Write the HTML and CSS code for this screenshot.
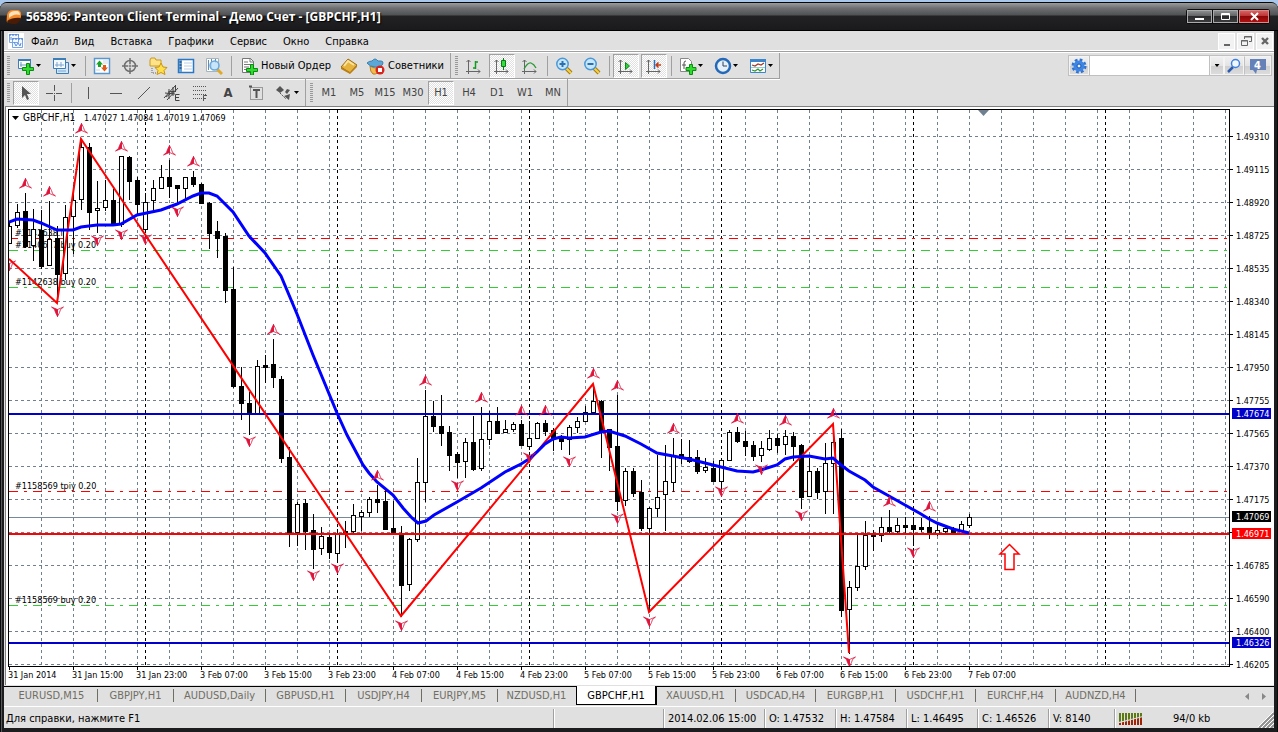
FILE: index.html
```html
<!DOCTYPE html>
<html lang="ru">
<head>
<meta charset="utf-8">
<title>565896: Panteon Client Terminal - Демо Счет - [GBPCHF,H1]</title>
<link rel="stylesheet" href="styles.css">
</head>
<body>
<div class="window">
  <header class="titlebar">
    <svg class="app-icon" viewBox="0 0 16 16"><path d="M2 13Q0 15 1 6Q2 1 7 1H12Q16 2 15 8Q14 12 10 11H6Q3 11 2 13Z" fill="#f58a2a"/><path d="M3 5Q5 2 9 2H12Q14 3 14 6Q8 4 3 9Z" fill="#ffe2bd"/><path d="M1 12Q7 8 15 9Q13 15 8 15Q2 15 1 12Z" fill="#4a1c05"/></svg>
    <h1 class="title">565896: Panteon Client Terminal - Демо Счет - [GBPCHF,H1]</h1>
    <div class="caption-buttons">
      <button class="cap" aria-label="Свернуть"><svg width="11" height="9"><path d="M1 6h9v2H1z" fill="#fff"/></svg></button>
      <button class="cap" aria-label="Развернуть"><svg width="11" height="9"><path d="M1.5 1.5h8v6h-8zM1 2.5h9" fill="none" stroke="#fff"/></svg></button>
      <button class="cap cap-close" aria-label="Закрыть"><svg width="11" height="9"><path d="M2 1l7 7M9 1L2 8" stroke="#fff" stroke-width="2"/></svg></button>
    </div>
  </header>
  <main class="client">
    <nav class="menubar">
      <svg class="menu-icon" viewBox="0 0 16 16"><path d="M0 0h16v16H0z" fill="#fff"/><path d="M1.500 1.500h9v8h-9zM4.500 5.500h10v9h-10z" fill="#f4f8ff" stroke="#7aa4e6"/><path d="M1 2h10M4 6h11" stroke="#3d78d8" stroke-dasharray="2 1"/><path d="M6 9l2 4 2-3 2 3 1-3M3 4v3" fill="none" stroke="#5c8fe0"/></svg>
      <button class="menu">Файл</button><button class="menu">Вид</button><button class="menu">Вставка</button><button class="menu">Графики</button><button class="menu">Сервис</button><button class="menu">Окно</button><button class="menu">Справка</button>
      <div class="mdi">
        <button aria-label="Свернуть окно"><svg width="14" height="14"><path d="M4 10h6v2H4z" fill="#666"/></svg></button>
        <button aria-label="Восстановить окно"><svg width="14" height="14"><path d="M5.500 5V2.500h7v5H10M5 3h8M2.500 6.500h6v5h-6zM2 7h7" fill="none" stroke="#666"/></svg></button>
        <button aria-label="Закрыть окно"><svg width="14" height="14"><path d="M4 4l6 6M10 4l-6 6" stroke="#666" stroke-width="2.400"/></svg></button>
      </div>
    </nav>

    <div class="toolrow">
      <div class="toolbar">
        <i class="grip"></i>
        <button class="tool drop" aria-label="Новый график"><svg width="18" height="18"><path d="M1.500 2.500h12v9h-12z" fill="#fff" stroke="#3c7fb8"/><path d="M1 3h13" stroke="#3c7fb8" stroke-width="2"/><path d="M4 5v5M3 8h8" stroke="#6a9ac0"/><path d="M9.500 6.500h3v4h4v3h-4v4h-3v-4h-4v-3h4z" fill="#2edc2e" stroke="#0c8a12"/></svg><i class="caret"></i></button>
        <button class="tool drop" aria-label="Профили"><svg width="18" height="18"><path d="M4.500 5.500h12v11h-12z" fill="#d4e6f6" stroke="#3c7fb8"/><path d="M1.500 1.500h12v10h-12z" fill="#f4faff" stroke="#3c7fb8"/><path d="M1 2h13" stroke="#3c7fb8" stroke-width="2"/><path d="M3 8h9M5 5v5M9 5v5M6 14h8" stroke="#7da6cc"/></svg><i class="caret"></i></button>
        <i class="sep"></i>
        <button class="tool" aria-label="Обзор рынка"><svg width="18" height="18"><path d="M1.500 1.500h15v15h-15z" fill="#fff" stroke="#5b97cf" stroke-width="1.500"/><path d="M10 4h5M3 13h4M10 6h5" stroke="#c4d4e4"/><path d="M6.500 3.500l3.500 4H8v2.500H5V7.500H3z" fill="#18a42a"/><path d="M11.500 14.500l-3.500-4h2V8h3v2.500h2z" fill="#e05a18"/></svg></button>
        <button class="tool" aria-label="Окно данных"><svg width="18" height="18" fill="none" stroke="#6f6f6f"><circle cx="9" cy="9" r="5.500" stroke-width="1.500"/><path d="M9 1v6M9 11v6M1 9h6M11 9h6" stroke-width="1.500"/><circle cx="9" cy="9" r="1"/></svg></button>
        <button class="tool" aria-label="Навигатор"><svg width="20" height="18"><path d="M2 3l1-2h4l1 2h5v6H2z" fill="#ffe38a" stroke="#c99a1c"/><path d="M4 11v5h5" fill="none" stroke="#666" stroke-dasharray="1 1"/><path d="M13 6l2 4 4 .5-3 3 1 4-4-2-4 2 1-4-3-3 4-.5z" fill="#ffe04a" stroke="#c99312"/></svg></button>
        <button class="tool" aria-label="Терминал"><svg width="18" height="18"><path d="M1.500 2.500h15v13h-15z" fill="#fff" stroke="#2b78c8" stroke-width="1.500"/><path d="M2 3h3v12H2z" fill="#6ba2d8"/><path d="M2.500 5h2M2.500 8h2M2.500 11h2" stroke="#123"/><path d="M7 6h8M7 9h8M7 12h8" stroke="#bcd0e6"/></svg></button>
        <button class="tool" aria-label="Тестер стратегий"><svg width="18" height="18"><path d="M1.500 1.500h12v13h-12z" fill="#fff" stroke="#a4b4c0"/><path d="M3.500 3v10M6.500 2v9M10.500 2v4" stroke="#6a8aa8"/><path d="M12 12l5 5" stroke="#e0a92a" stroke-width="3"/><circle cx="9.500" cy="8.500" r="4.500" fill="#bfe0f8" fill-opacity=".85" stroke="#6aa8dc" stroke-width="1.500"/></svg></button>
        <i class="sep"></i>
        <button class="tool labelled"><svg width="18" height="18"><path d="M2.500 1.500h8l3 3v11h-11z" fill="#fff" stroke="#777"/><path d="M10 1v4h4M4 5h4M4 7.500h7M4 10h5M4 12.500h3" fill="none" stroke="#777"/><path d="M10.500 7.500h3v4h4v3h-4v3.500h-3v-3.500h-4v-3h4z" fill="#2edc2e" stroke="#0c8a12"/></svg><span>Новый Ордер</span></button>
        <button class="tool" aria-label="MetaEditor"><svg width="18" height="18"><path d="M1 10l7-8 9 6-7 8z" fill="#e6b43c" stroke="#9c6a10"/><path d="M4 9l4-5 6 4" fill="none" stroke="#fbe3a0" stroke-width="2"/><path d="M1 10v2l9 5 7-7V8l-7 7z" fill="#b97f18"/></svg></button>
        <button class="tool labelled experts"><svg width="18" height="18"><path d="M3 9q6 4 11 0l1 3q-5 6-9 5-3-2-3-8z" fill="#f0bc50" stroke="#b98324"/><path d="M0 6Q2 4 5 4q3-4 6 0l3 0q2 0 2 2-1 5-8 4-5 0-8-4z" fill="#5ba8d8" stroke="#3c7fae"/><circle cx="13" cy="13" r="4.500" fill="#d8241a"/><path d="M11 11h4v4h-4z" fill="#fff"/></svg><span>Советники</span></button>
      </div>
      <div class="toolbar next">
        <i class="grip"></i>
        <button class="tool" aria-label="Бары"><svg width="18" height="18" fill="none"><path d="M3.500 3v14M1 14.500h14M1.500 5l2-2 2 2M13 12.500l2 2-2 2" stroke="#666"/><path d="M10.500 4v8M10 5h3M8 11h2" stroke="#129a22" stroke-width="1.500"/></svg></button>
        <button class="tool pressed" aria-label="Свечи"><svg width="18" height="18" fill="none"><path d="M3.500 3v14M1 14.500h14M1.500 5l2-2 2 2M13 12.500l2 2-2 2" stroke="#666"/><path d="M10.500 1v12" stroke="#087a14"/><path d="M8.500 3.500h4v6h-4z" fill="#34dc3c" stroke="#087a14"/></svg></button>
        <button class="tool" aria-label="Линия"><svg width="18" height="18" fill="none"><path d="M3.500 3v14M1 14.500h14M1.500 5l2-2 2 2M13 12.500l2 2-2 2" stroke="#666"/><path d="M3 12q4-7 7-6t5 5" stroke="#2a9a34" stroke-width="1.300"/></svg></button>
        <i class="sep"></i>
        <button class="tool" aria-label="Увеличить"><svg width="18" height="18"><path d="M11 11l5 5" stroke="#a87a14" stroke-width="4"/><path d="M11 11l5 5" stroke="#f4d244" stroke-width="2"/><circle cx="7.500" cy="7" r="5.700" fill="#c8e6fa" stroke="#4a98d8" stroke-width="1.500"/><path d="M4.500 7h6M7.500 4v6" stroke="#2a70b0" stroke-width="2"/></svg></button>
        <button class="tool" aria-label="Уменьшить"><svg width="18" height="18"><path d="M11 11l5 5" stroke="#a87a14" stroke-width="4"/><path d="M11 11l5 5" stroke="#f4d244" stroke-width="2"/><circle cx="7.500" cy="7" r="5.700" fill="#c8e6fa" stroke="#4a98d8" stroke-width="1.500"/><path d="M4.500 7h6" stroke="#2a70b0" stroke-width="2"/></svg></button>
        <i class="sep"></i>
        <button class="tool pressed" aria-label="Автопрокрутка"><svg width="18" height="18" fill="none"><path d="M3.500 3v14M1 14.500h14M1.500 5l2-2 2 2M13 12.500l2 2-2 2" stroke="#666"/><path d="M8.500 5.500v7l4-3.500z" fill="#2ad03a" stroke="#0c8a18"/></svg></button>
        <button class="tool pressed" aria-label="Сдвиг графика"><svg width="18" height="18" fill="none"><path d="M3.500 3v14M1 14.500h14M1.500 5l2-2 2 2M13 12.500l2 2-2 2" stroke="#666"/><path d="M9.500 3v9" stroke="#2272c8" stroke-width="1.500"/><path d="M11 8h5M13.500 5.500L11 8l2.500 2.500" stroke="#c43a14" stroke-width="1.500"/></svg></button>
        <i class="sep"></i>
        <button class="tool drop" aria-label="Индикаторы"><svg width="18" height="18"><path d="M1.500 1.500h8l3 3v10h-11z" fill="#fff" stroke="#888"/><path d="M7 4Q5 4 5 6v6M3 8h4" fill="none" stroke="#555"/><path d="M10.500 7.500h3v3h3.500v3h-3.500v4h-3v-4h-3.500v-3h3.500z" fill="#2edc2e" stroke="#0c8a12"/></svg><i class="caret"></i></button>
        <button class="tool drop" aria-label="Периоды"><svg width="18" height="18"><circle cx="9" cy="9" r="7" fill="#e4f0fc" stroke="#2468b8" stroke-width="2.500"/><path d="M9 4.500V9h4" fill="none" stroke="#345"/></svg><i class="caret"></i></button>
        <button class="tool drop" aria-label="Шаблоны"><svg width="18" height="18"><path d="M1.500 2.500h15v13h-15z" fill="#fff" stroke="#3c86cc"/><path d="M1 3.500h16" stroke="#3c86cc" stroke-width="3"/><path d="M3 8l3 1 3-2 3 1 3-2" fill="none" stroke="#a43a28" stroke-width="1.300"/><path d="M2 10.500h14" stroke="#9cc"/><path d="M3 13l3 1 3-2 2 2 3-2" fill="none" stroke="#2a9a34" stroke-width="1.300"/></svg><i class="caret"></i></button>
      </div>
      <form class="search">
        <button type="button" class="s-gear" aria-label="Настройки"><svg width="16" height="16"><circle cx="8" cy="8" r="6" fill="none" stroke="#2f74d4" stroke-width="3" stroke-dasharray="2.600 2.100"/><circle cx="8" cy="8" r="5.500" fill="#3f86e4"/><circle cx="8" cy="8" r="2" fill="#e4eefc" stroke="#1c54b0"/></svg></button>
        <input type="text" aria-label="Поиск">
        <button type="button" class="s-drop" aria-label="История"><i class="caret"></i></button>
        <button type="button" class="s-find" aria-label="Найти"><svg width="16" height="16"><path d="M7 9l-5 5" stroke="#2c5cb0" stroke-width="2.500"/><circle cx="9.500" cy="5.500" r="4" fill="#f0f8ff" stroke="#3f7fe0" stroke-width="1.500"/></svg></button>
        <button type="button" class="s-chat"><svg width="16" height="16" viewBox="0 0 16 16"><path d="M0 1h16v11H7l-1 4-3-4H0z" fill="#6582b8"/></svg><span>4</span></button>
      </form>
    </div>

    <div class="toolrow">
      <div class="toolbar last">
        <i class="grip"></i>
        <button class="tool pressed" aria-label="Курсор"><svg width="18" height="18"><path d="M5 2v12l3-3 2 5 2-1-2-5h4z" fill="#555"/></svg></button>
        <button class="tool" aria-label="Перекрестие"><svg width="18" height="18"><path d="M9.500 1v6M9.500 11v6M1 9.500h7M11 9.500h6M9 9.500h1" stroke="#555"/></svg></button>
        <i class="sep"></i>
        <button class="tool" aria-label="Вертикальная линия"><svg width="18" height="18"><path d="M9.500 3v12" stroke="#555"/></svg></button>
        <button class="tool" aria-label="Горизонтальная линия"><svg width="18" height="18"><path d="M3 9.500h12" stroke="#555"/></svg></button>
        <button class="tool" aria-label="Трендовая линия"><svg width="18" height="18"><path d="M3 15L15 3" stroke="#555"/></svg></button>
        <button class="tool" aria-label="Канал"><svg width="18" height="18" fill="none" stroke="#444"><path d="M1 14L12 2M4 16L15 4M2 9l10 1M3 13l8-6M6 5v10M10 3v9M12.500 1v7M5 8l8-1"/><path d="M16.500 10.500h-4v6h4M12 13.500h4" /></svg></button>
        <button class="tool" aria-label="Фибоначчи"><svg width="18" height="18" fill="none" stroke="#555"><path d="M2 2.500h14M2 6.500h14M2 10.500h14M2 14.500h9" stroke-dasharray="1 1"/><path d="M12.500 17v-5.500H16M12 14.500h3"/></svg></button>
        <button class="tool glyph">A</button>
        <button class="tool" aria-label="Метка"><svg width="18" height="18" fill="none" stroke="#555"><path d="M3.500 3.500h12v12h-12z" stroke-dasharray="1 1"/><path d="M2 2.500h3" stroke-width="2"/><path d="M6 6h7M9.500 6v8" stroke-width="2"/></svg></button>
        <button class="tool drop" aria-label="Стрелки"><svg width="18" height="18" fill="#555"><path d="M5 2l4 4-4 3-4-3z"/><path d="M5 9l6 6" stroke="#555" stroke-dasharray="2 1"/><path d="M10 8l2-3 3 1-3 4z"/><path d="M9 12l6-2-1 6z"/></svg><i class="caret"></i></button>
      </div>
      <div class="toolbar last next">
        <i class="grip"></i>
        <button class="tool">M1</button><button class="tool">M5</button><button class="tool">M15</button><button class="tool">M30</button><button class="tool pressed">H1</button><button class="tool">H4</button><button class="tool">D1</button><button class="tool">W1</button><button class="tool">MN</button>
      </div>
    </div>

    <section class="chart">
      <div class="plot">
        <svg id="plot" class="plot-svg"></svg>
      </div>
      <ul class="prices" id="prices"></ul>
      <ul class="times" id="times"></ul>
    </section>

    <nav class="tabs">
      <button class="tab w92">EURUSD,M15</button><button class="tab w76">GBPJPY,H1</button><button class="tab w92">AUDUSD,Daily</button><button class="tab">GBPUSD,H1</button><button class="tab w76">USDJPY,H4</button><button class="tab w76">EURJPY,M5</button><button class="tab before">NZDUSD,H1</button><button class="tab active">GBPCHF,H1</button><button class="tab">XAUUSD,H1</button><button class="tab">USDCAD,H4</button><button class="tab">EURGBP,H1</button><button class="tab">USDCHF,H1</button><button class="tab">EURCHF,H4</button><button class="tab">AUDNZD,H4</button>
      <div class="tab-scroll"><button aria-label="Назад"><svg width="4" height="7"><path d="M4 0v7L0 3.500z" fill="#888"/></svg></button><button aria-label="Вперёд"><svg width="4" height="7"><path d="M0 0v7l4-3.500z" fill="#888"/></svg></button></div>
    </nav>

    <footer class="status">
      <span class="pane help">Для справки, нажмите F1</span>
      <span class="pane w110"></span>
      <span class="pane w101">2014.02.06 15:00</span>
      <span class="pane w71">O: 1.47532</span>
      <span class="pane w71">H: 1.47584</span>
      <span class="pane w71">L: 1.46495</span>
      <span class="pane w71">C: 1.46526</span>
      <span class="pane w65">V: 8140</span>
      <span class="pane traffic"><svg width="24" height="12"><path d="M0 0h24v5L0 9z" fill="#5c7a12"/><path d="M0 10l24-6v8H0z" fill="#a02408"/><path d="M0 9.500l24-6" stroke="#e0e0e0"/><path d="M2.500 0v12M5.500 0v12M8.500 0v12M11.500 0v12M14.500 0v12M17.500 0v12M20.500 0v12M23.500 0v12" stroke="#e0e0e0"/></svg><span>94/0 kb</span></span>
      <svg class="sizer" width="16" height="16"><path d="M1 16L16 1M5 16L16 5M9 16L16 9M13 16l3-3" stroke="#909090" stroke-width="2"/><path d="M-1 16L16-1M3 16L16 3M7 16L16 7M11 16l5-5" stroke="#fff"/></svg>
    </footer>
  </main>
</div>
<script src="chart.js"></script>
</body>
</html>
```
FILE: styles.css
```css
* { box-sizing: border-box; }

body {
  margin: 0;
  background: #a9c7ea;
  font-family: "DejaVu Sans Condensed", "DejaVu Sans", sans-serif;
  font-size: 11px;
  color: #000;
}

button {
  font: inherit;
  color: inherit;
  background: none;
  border: 0;
  padding: 0;
  margin: 0;
}

svg { display: block; flex: none; }
ul { list-style: none; margin: 0; padding: 0; }

.window {
  display: flex;
  flex-direction: column;
  height: calc(100vh - 2px);
  min-height: 400px;
  margin-top: 2px;
  padding: 0 4px 4px;
  background: #1c1c1e;
  border: solid #060606;
  border-width: 1px 0 0;
  border-radius: 7px 7px 0 0;
  box-shadow: inset 1px 0 #0a0a0a, inset 2px 0 #55585c, inset -1px 0 #0a0a0a;
}

/* Title bar */
.titlebar {
  display: flex;
  align-items: center;
  gap: 4px;
  flex: none;
  height: 28px;
  margin: 0 -4px;
  padding: 0 8px 0 6px;
  border-radius: 6px 6px 0 0;
  border-bottom: 1px solid #000;
  background: linear-gradient(#9a9c9e 0, #6e7072 5px, #505154 12px, #222224 13px, #1a1a1c 100%);
}
.app-icon { width: 16px; height: 16px; }
.title {
  flex: 1;
  margin: 0;
  font: bold 12px "Open Sans", "Noto Sans", sans-serif;
  color: #fff;
  text-shadow: 1px 1px 1px #000;
}
.caption-buttons {
  display: flex;
  gap: 1px;
  padding: 1px;
  background: #0c0c0d;
  border-radius: 3px;
}
.cap {
  display: grid;
  place-items: center;
  width: 25px;
  height: 13px;
  border: 1px solid #a8aaac;
  background: linear-gradient(#8a8c8e, #5c5e60 50%, #2a2a2c 50%, #3c3c3e);
}
.cap-close {
  width: 30px;
  border-color: #d88;
  background: linear-gradient(#d86060, #b83030 50%, #8c0808 50%, #b01010);
}

.client {
  display: flex;
  flex-direction: column;
  flex: 1;
  min-height: 0;
  background: #e0e0e0;
}

/* Menu */
.menubar {
  display: flex;
  align-items: center;
  flex: none;
  height: 21px;
  padding-left: 4px;
  border-bottom: 1px solid #a0a0a0;
  box-shadow: inset 0 -1px #fff, 0 1px #fff;
}
.menu-icon { width: 16px; height: 16px; margin-right: 1px; }
.menu { padding: 0 8px; }
.menu:nth-of-type(1) { padding-left: 6px; }
.mdi { display: flex; gap: 2px; margin-left: auto; padding-right: 1px; }
.mdi button {
  display: grid;
  place-items: center;
  width: 17px;
  height: 17px;
  background: #f2f2f2;
  border: 1px solid #fff;
}

/* Toolbars */
.toolrow {
  display: flex;
  flex: none;
  height: 27px;
}
.menubar + .toolrow { padding-top: 1px; }
.toolbar {
  display: flex;
  align-items: center;
  border-right: 1px solid #a0a0a0;
  border-bottom: 1px solid #a0a0a0;
  box-shadow: 0 1px #fff;
}
.toolbar.next { padding-left: 1px; }
.toolbar.last { border-bottom: 0; box-shadow: none; }
.grip {
  width: 8px;
  height: 20px;
  border: solid transparent;
  border-width: 0 2px 0 3px;
  background: repeating-linear-gradient(#999 0 1px, #e0e0e0 1px 2px) padding-box;
}
.sep {
  width: 6px;
  height: 20px;
  background: linear-gradient(#a0a0a0, #a0a0a0) center / 1px 100% no-repeat;
}
.tool {
  display: flex;
  align-items: center;
  justify-content: center;
  width: 28px;
  height: 24px;
  color: #444;
}
.toolbar:not(.last) .tool { color: #000; }
.drop {
  justify-content: flex-start;
  gap: 1px;
  width: 35px;
  padding-left: 5px;
}
.labelled {
  justify-content: flex-start;
  gap: 3px;
  width: 101px;
  padding-left: 6px;
}
.experts { width: 87px; padding-left: 4px; }
.glyph { font-size: 13px; font-weight: bold; }
.pressed {
  width: 26px;
  margin: 0 1px;
  border: 1px solid;
  border-color: #a0a0a0 #fff #fff #a0a0a0;
  background: repeating-conic-gradient(#fff 0 25%, #e0e0e0 0 50%) 0 0 / 2px 2px;
}
.caret {
  flex: none;
  width: 5px;
  height: 3px;
  background: #000;
  clip-path: polygon(0 0, 100% 0, 50% 100%);
}

/* Search */
.search {
  display: flex;
  align-self: flex-start;
  height: 21px;
  margin: 2px 2px 0 auto;
  border: 1px solid #c0c0c0;
}
.search button {
  display: grid;
  place-items: center;
  border: 1px solid #f4f4f4;
  background: linear-gradient(#f0f0f0, #e4e4e4 50%, #cecece 50%, #dcdcdc);
}
.search input {
  width: 121px;
  padding: 0 3px;
  border: solid #c0c0c0;
  border-width: 0 1px;
  background: #fff;
  font: inherit;
}
.search .s-gear, .search .s-find { width: 20px; }
.search .s-drop { width: 14px; }
.search .s-chat { width: 27px; border-left-color: #c0c0c0; color: #fff; font-weight: bold; }
.s-chat svg, .s-chat span { grid-area: 1 / 1; }

/* Chart */
.chart {
  display: grid;
  grid-template: minmax(0, 1fr) 18px / minmax(0, 1fr) 44px;
  flex: 1;
  min-height: 0;
  margin: 0 0 1px 1px;
  padding: 2px 0 0 2px;
  background: #fff;
  border: 1px solid #808080;
  border-width: 1px 0 0 1px;
  font-size: 9px;
}
.plot {
  border: 1px solid #000;
  min-width: 0;
  min-height: 0;
}
.plot-svg {
  width: 100%;
  height: 100%;
  overflow: hidden;
}
.plot-svg text { font-size: 9px; }
.plot-svg .symbol { font-size: 10px; }
.prices {
  position: relative;
  padding-top: 11px;
}
.prices li {
  display: flex;
  align-items: center;
  height: 33px;
}
.prices li::before {
  content: "";
  width: 3px;
  height: 1px;
  margin-right: 3px;
  background: #000;
}
.prices .tag {
  position: absolute;
  left: 2px;
  right: 3px;
  height: 11px;
  padding-left: 4px;
  color: #fff;
}
.prices .tag::before { content: none; }
.tag.blue { background: #0000c8; }
.tag.black { background: #000; }
.tag.red { background: #f00; }
.times {
  grid-column: 1 / -1;
  display: flex;
  align-items: flex-start;
}
.times li {
  flex: none;
  width: 64px;
  padding-top: 3px;
  white-space: nowrap;
  background: linear-gradient(#000, #000) 1px 0 / 1px 3px no-repeat;
}

/* Chart tabs */
.tabs {
  display: flex;
  align-items: flex-start;
  flex: none;
  height: 21px;
  padding-left: 2px;
  border-top: 1px solid #000;
  border-bottom: 1px solid #fff;
  color: #706e64;
}
.tab {
  width: 80px;
  height: 13px;
  margin-top: 2px;
  border-right: 1px solid #706e64;
}
.w76 { width: 76px; }
.w92 { width: 92px; }
.tab.before { border-right-color: transparent; width: 78px; }
.tab.active {
  height: 19px;
  margin-top: -1px;
  background: #fff;
  border: 1px solid #000;
  border-top: 0;
  box-shadow: 1px 0 #000;
  color: #000;
}
.tab-scroll { display: flex; gap: 13px; margin: 6px 8px 0 auto; }

/* Status bar */
.status {
  display: flex;
  align-items: stretch;
  flex: none;
  height: 21px;
  padding-top: 2px;
  white-space: nowrap;
}
.pane {
  display: flex;
  align-items: center;
  padding-left: 4px;
  border-left: 1px solid #a0a0a0;
  box-shadow: inset 1px 0 #fff;
}
.help { flex: 1; padding-left: 2px; border-left: 0; box-shadow: none; }
.w65 { width: 66px; }
.w71 { width: 71px; }
.w101 { width: 101px; }
.w110 { width: 110px; }
.traffic { width: 144px; gap: 30px; }
.sizer { align-self: flex-end; }
```
FILE: chart.js
```js
// Each bar: high, body top, body bottom, low, 1 for a bearish (filled) body.
const bars = [
[222,226,243,243,0],[204,212,225,227,0],[193,211,246,247,1],[209,229,245,260,0],[210,230,266,268,1],[201,239,265,265,0],
[226,238,274,297,1],[205,217,273,279,0],[185,200,216,253,0],[139,147,199,209,0],[143,147,212,229,1],[181,208,210,232,0],
[180,200,207,210,0],[189,200,225,225,1],[156,156,224,226,0],[156,157,181,199,1],[177,180,204,213,1],[193,202,229,232,0],
[180,188,200,209,0],[165,177,188,188,0],[160,177,186,197,1],[185,185,188,204,1],[177,177,188,198,0],[171,177,184,186,1],
[183,184,203,203,1],[202,203,233,248,1],[221,231,238,257,1],[233,236,290,302,1],[267,289,386,387,1],[367,386,403,419,1],
[392,403,413,434,1],[360,366,413,413,0],[355,365,367,382,1],[339,364,377,387,1],[376,379,458,462,1],[447,457,533,546,1],
[502,504,532,545,0],[499,503,531,549,1],[514,530,549,568,1],[527,536,548,554,0],[533,537,552,558,1],[529,533,553,562,0],
[521,531,533,547,1],[504,515,531,532,0],[510,512,516,530,0],[497,499,512,516,0],[485,499,502,512,1],[488,501,529,529,1],
[501,528,533,533,1],[526,534,585,616,1],[538,539,584,590,0],[458,482,539,541,0],[390,416,482,501,0],[401,416,426,431,1],
[395,426,433,445,1],[426,432,455,470,1],[452,454,462,477,1],[438,442,461,477,0],[416,442,469,470,1],[407,439,468,470,0],
[411,421,439,444,0],[407,421,433,433,1],[420,429,432,432,0],[422,424,429,431,0],[420,424,445,445,1],[421,438,446,449,0],
[422,423,438,438,0],[420,423,431,435,1],[428,430,438,450,1],[435,438,441,449,1],[425,427,439,454,0],[417,421,427,432,0],
[406,412,421,421,0],[385,401,412,413,0],[400,401,431,457,1],[429,429,447,470,1],[395,446,501,510,1],[468,471,500,505,0],
[468,471,493,496,1],[480,492,528,530,1],[507,508,528,611,0],[455,497,508,516,0],[445,481,494,530,0],[438,455,482,491,0],
[439,454,458,463,1],[440,457,461,462,1],[450,457,471,473,1],[458,467,470,472,0],[461,468,481,481,1],[458,460,481,487,0],
[430,432,460,460,0],[427,432,441,442,1],[431,441,446,455,1],[441,445,456,460,1],[441,448,455,461,0],[430,438,449,450,0],
[434,438,445,452,1],[430,436,444,454,0],[432,436,446,460,1],[444,445,497,508,1],[458,471,496,496,0],[468,471,492,498,1],
[443,463,491,513,0],[438,442,463,513,0],[429,438,610,616,1],[581,587,609,653,0],[534,566,587,590,0],[521,535,566,569,0],
[530,534,536,550,1],[517,527,535,541,0],[510,527,531,532,1],[518,525,531,532,0],[517,525,527,534,1],[517,525,529,545,1],
[518,527,529,531,1],[516,527,533,538,1],[524,530,533,535,0],[525,528,531,533,0],[527,529,533,533,1],[521,524,531,531,0],
[514,517,525,527,0]];

const average = "9,222 17,219 33,220 41,223 57,230 73,230 81,227 97,225 113,225 121,224 137,215 161,210 177,204 193,196 201,193 209,193 217,196 233,212 249,236 265,253 281,276 297,314 313,355 337,413 347,435 363,465 369,473 377,482 393,495 403,508 412,518 418,523 426,521 434,515 457,502 481,488 505,472 521,464 529,459 537,452 545,444 553,439 561,437 569,438 585,437 601,432 609,431 625,436 641,444 657,453 673,456 689,459 705,463 721,467 737,471 753,472 761,470 777,465 785,459 793,457 809,456 825,459 833,458 841,465 849,471 865,480 873,487 889,496 905,505 921,514 929,519 937,523 945,526 953,529 969,533";
const zigzag = "9,259 57,303 81,139 401,616 593,384 649,612 833,424 849,653";

const fractalsUp = [[25,183],[49,191],[81,128],[121,146],[169,150],[193,161],[273,329],[377,475],[425,380],[481,397],[521,410],[545,410],[593,373],[617,385],[673,428],[737,418],[785,420],[833,413],[889,501],[929,506]];
const fractalsDown = [[9,265],[57,311],[97,240],[121,234],[145,239],[177,211],[249,441],[313,575],[337,568],[401,625],[457,485],[529,457],[569,461],[617,518],[649,621],[721,491],[761,469],[801,515],[849,661],[913,552]];

const orders = [[238,"#f00",236,"#1142638 l"],[250,"#32cd32",248,"#1140617 buy 0.20"],[287,"#32cd32",285,"#1142638 buy 0.20"],[491,"#f00",489,"#1158569 tpiy 0.20"],[605,"#32cd32",603,"#1158569 buy 0.20"]];

const hline = (y, attrs) => `<line x1="9" x2="4000" y1="${y}" y2="${y}" ${attrs}/>`;
const vline = (x, attrs) => `<line x1="${x}" x2="${x}" y1="110" y2="2000" ${attrs}/>`;

let out = '<g transform="translate(-9 -110)"><g shape-rendering="crispEdges">';
for (let y = 136; y < 1500; y += 33) out += hline(y + 0.5, 'stroke="#708090" stroke-dasharray="3 3"');
for (let x = 41; x < 3000; x += 32) out += vline(x + 0.5, 'stroke="#708090" stroke-dasharray="3 3"');
for (let x = 145; x < 3000; x += 192) out += vline(x + 0.5, 'stroke="#000" stroke-dasharray="3 3"');
out += '</g>';
for (const [, , y, label] of orders) out += `<text x="15" y="${y}">${label}</text>`;
out += '<g shape-rendering="crispEdges">';
for (const [y, color] of orders) out += hline(y + 0.5, `stroke="${color}" stroke-dasharray="9 6 3 6"`);
out += hline(517.5, 'stroke="#778899"');
bars.forEach(([high, top, bottom, low, filled], i) => {
  const x = 9 + i * 8;
  out += `<rect x="${x}" y="${high}" width="1" height="${low - high + 1}"/>`;
  out += `<rect x="${x - 1.5}" y="${top + 0.5}" width="4" height="${bottom - top}" fill="${filled ? "#000" : "#fff"}" stroke="#000"/>`;
});
out += hline(414, 'stroke="#0000c8" stroke-width="2"') + hline(534, 'stroke="#f00" stroke-width="2"') + hline(643, 'stroke="#0000c8" stroke-width="2"');
out += '</g>';
out += `<polyline points="${zigzag}" fill="none" stroke="#f00" stroke-width="2"/>`;
out += `<polyline points="${average}" fill="none" stroke="#00f" stroke-width="3"/>`;

const fractal = (x, y, flip) => `<g transform="translate(${x + 0.5} ${y + 0.5}) scale(1 ${flip})" stroke="#dc143c" stroke-width=".8"><path d="M0-5L-2-1L-3 2L-6 4.500L0 2Z" fill="#dc143c"/><path d="M0-5L2-1L3 2L6 4.500L0 2Z" fill="none"/></g>`;
for (const [x, y] of fractalsUp) out += fractal(x, y, 1);
for (const [x, y] of fractalsDown) out += fractal(x, y, -1);

out += '<path d="M1009.500 544.500L1019 554h-5v15.500h-9V554h-5z" fill="#fff" stroke="#f00" stroke-width="1.500"/>';
out += '<path d="M978 110h11l-5.500 6z" fill="#708090"/>';
out += '<path d="M12 116h7l-3.500 4z"/>';
out += '<text class="symbol" x="23" y="121">GBPCHF,H1</text><text x="84" y="121">1.47027 1.47084 1.47019 1.47069</text></g>';
document.getElementById("plot").innerHTML = out;

const prices = ["1.49310","1.49115","1.48920","1.48725","1.48535","1.48340","1.48145","1.47950","1.47755","1.47565","1.47370","1.47175","","1.46785","1.46590","1.46400","1.46205"];
const tags = [[299,"blue","1.47674"],[402,"black","1.47069"],[419,"red","1.46971"],[528,"blue","1.46326"]];
document.getElementById("prices").innerHTML =
  prices.map(p => `<li>${p}</li>`).join("") +
  tags.map(([y, color, p]) => `<li class="tag ${color}" style="top:${y}px">${p}</li>`).join("");

const times = ["31 Jan 2014","31 Jan 15:00","31 Jan 23:00","3 Feb 07:00","3 Feb 15:00","3 Feb 23:00","4 Feb 07:00","4 Feb 15:00","4 Feb 23:00","5 Feb 07:00","5 Feb 15:00","5 Feb 23:00","6 Feb 07:00","6 Feb 15:00","6 Feb 23:00","7 Feb 07:00"];
document.getElementById("times").innerHTML = times.map(t => `<li>${t}</li>`).join("");
```
